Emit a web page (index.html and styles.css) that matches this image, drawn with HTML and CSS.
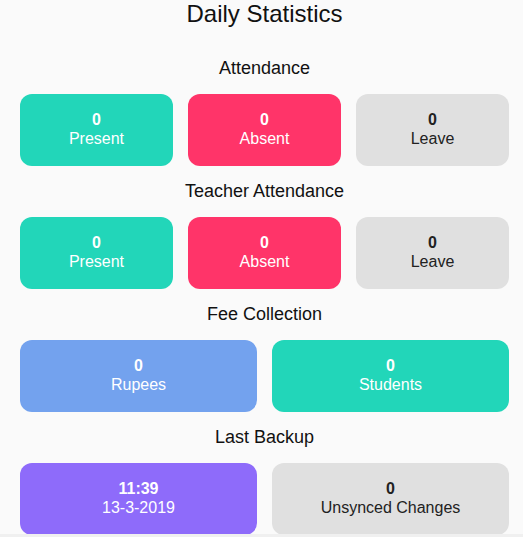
FILE: index.html
```html
<!DOCTYPE html>
<html>
<head>
<meta charset="utf-8">
<link rel="stylesheet" href="styles.css">
</head>
<body>
<div class="page">
  <h1 class="title">Daily Statistics</h1>

  <h2 class="section-title first">Attendance</h2>
  <div class="row three">
    <div class="card teal"><div class="num">0</div><div class="label">Present</div></div>
    <div class="card red"><div class="num">0</div><div class="label">Absent</div></div>
    <div class="card gray"><div class="num">0</div><div class="label">Leave</div></div>
  </div>

  <h2 class="section-title">Teacher Attendance</h2>
  <div class="row three">
    <div class="card teal"><div class="num">0</div><div class="label">Present</div></div>
    <div class="card red"><div class="num">0</div><div class="label">Absent</div></div>
    <div class="card gray"><div class="num">0</div><div class="label">Leave</div></div>
  </div>

  <h2 class="section-title">Fee Collection</h2>
  <div class="row two">
    <div class="card blue"><div class="num">0</div><div class="label">Rupees</div></div>
    <div class="card teal"><div class="num">0</div><div class="label">Students</div></div>
  </div>

  <h2 class="section-title">Last Backup</h2>
  <div class="row two">
    <div class="card purple"><div class="num">11:39</div><div class="label">13-3-2019</div></div>
    <div class="card gray"><div class="num">0</div><div class="label">Unsynced Changes</div></div>
  </div>
</div>
<div class="bottom-strip"></div>
</body>
</html>
```
FILE: styles.css
```css
html, body {
  margin: 0;
  padding: 0;
  background: #fafafa;
  overflow: hidden;
}
body {
  font-family: "Liberation Sans", Arial, sans-serif;
  color: #111;
  height: 537px;
  position: relative;
}
.page {
  width: 489px;
  padding: 0 14px 0 20px;
  display: flex;
  flex-direction: column;
}
.title {
  margin: 0;
  font-size: 24px;
  font-weight: normal;
  line-height: 28px;
  text-align: center;
  height: 28px;
}
.section-title {
  margin: 14px 0 15px;
  font-size: 18px;
  font-weight: normal;
  line-height: 22px;
  text-align: center;
}
.section-title.first {
  margin-top: 29px;
}
.row {
  display: grid;
  gap: 15px;
}
.row.three { grid-template-columns: repeat(3, 1fr); }
.row.two { grid-template-columns: repeat(2, 1fr); }
.card {
  height: 72px;
  border-radius: 12px;
  display: flex;
  flex-direction: column;
  align-items: center;
  justify-content: center;
  font-size: 16px;
  line-height: 19px;
  color: #fff;
  padding-bottom: 2px;
  box-sizing: border-box;
}
.card .num {
  font-weight: bold;
}
.teal { background: #22d6b9; }
.red { background: #ff3469; }
.gray { background: #e0e0e0; color: #222; }
.blue { background: #73a2ee; }
.purple { background: #8e6bfa; }
.bottom-strip {
  position: absolute;
  left: 0;
  right: 0;
  bottom: 0;
  height: 3px;
  background: #f0f0f0;
}
```
